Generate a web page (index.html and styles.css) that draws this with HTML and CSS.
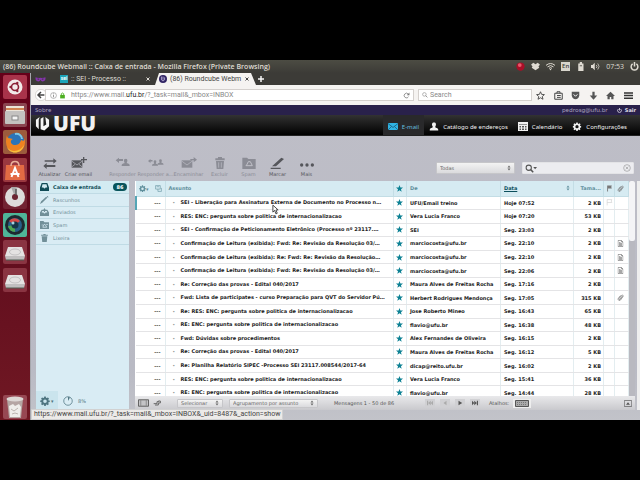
FILE: index.html
```
<!DOCTYPE html>
<html lang="pt-BR">
<head>
<meta charset="utf-8">
<title>(86) Roundcube Webmail :: Caixa de entrada</title>
<link rel="stylesheet" href="styles.css">
</head>
<body>
<svg class="defs" aria-hidden="true">
  <symbol id="star" viewBox="0 0 10 10"><path d="M5 0l1.3 3.5 3.7.2-2.9 2.3 1 3.7L5 7.6 1.9 9.7l1-3.7L0 3.700l3.700-.2z"/></symbol>
  <symbol id="doc" viewBox="0 0 12 14"><path d="M1 1h7l3 3v9H1zM8 1v3h3M3 7h6M3 9h6M3 11h6M3 5h3" fill="none" stroke="currentColor" stroke-width="1.300"/></symbol>
  <symbol id="clip" viewBox="0 0 14 14"><path d="M11 4L6 10.500c-1 1.200-2.800 0-2-1.300L9 3c1.500-2 4.500 0 3 2L7 12c-2 2.500-6 0-4.500-3L7 3" fill="none" stroke="currentColor" stroke-width="1.500"/></symbol>
  <symbol id="gear" viewBox="0 0 20 20"><path fill-rule="evenodd" d="M8.500 1h3l.5 2.500 1.600.7L15.800 3 18 5.200l-1.400 2.100.6 1.500L19.500 9v3l-2.400.5-.7 1.500 1.300 2.200-2.100 2.100-2.100-1.400-1.500.6L11.500 20h-3L8 17.500l-1.500-.6-2.200 1.400-2.200-2.200L3.500 14l-.6-1.500L.5 12V9l2.400-.4.6-1.500L2.100 5l2.200-2.100 2.100 1.300L8 3.500zM10 6.800a3.600 3.600 0 1 0 0 7.200 3.600 3.600 0 0 0 0-7.200z"/></symbol>
  <symbol id="updown" viewBox="0 0 8 12"><path d="M4 1l3 4H1zM4 11L1 7h6z"/></symbol>
  <symbol id="person" viewBox="0 0 20 20"><path d="M10 1c5 0 5 5 3.500 8-1 2-1 3 .5 3.500 3 1 6 1.500 6 5.500v1H0v-1c0-4 3-4.500 6-5.500C7.500 12 7.500 11 6.500 9 5 6 5 1 10 1z"/></symbol>
  <symbol id="power" viewBox="0 0 12 12"><path d="M3.500 2.500a4.500 4.500 0 1 0 5 0M6 0v6" fill="none" stroke="currentColor" stroke-width="2"/></symbol>
  <symbol id="close" viewBox="0 0 8 8"><path d="M1 1l6 6M7 1L1 7" stroke="currentColor" stroke-width="2"/></symbol>
  <symbol id="drive" viewBox="0 0 24 24"><path d="M5 7h14l3 9H2z" fill="#e4e2e2"/><path d="M2 16h20l-1 4H3z" fill="#c0bebf"/><ellipse cx="12" cy="12" rx="5.500" ry="3" fill="none" stroke="#c3c1c2"/><path d="M3 20h18" stroke="#4e5c50"/></symbol>
</svg>

<div class="desktop">
  <header class="titlebar">
    <span>(86) Roundcube Webmail :: Caixa de entrada - Mozilla Firefox (Private Browsing)</span>
    <div class="tray">
      <svg viewBox="0 0 12 12"><circle cx="6" cy="6" r="5.500" fill="#a90f28"/><circle cx="5" cy="4" r="2.500" fill="#e9586a"/></svg>
      <svg viewBox="0 0 12 12"><path d="M3 1l3 2 3-2 3 2.500-2 2 1 2L6 11 1 7.500l1-2-2-2z"/></svg>
      <svg viewBox="0 0 12 12"><path d="M0 4.500q6-5 12 0M2 6.500q4-3.500 8 0M4 8.500q2-2 4 0" fill="none" stroke="currentColor" stroke-width="1.300"/><circle cx="6" cy="10" r="1"/></svg>
      <span class="lang">En</span>
      <svg viewBox="0 0 12 12"><path d="M3 2h2V0h3v2h2v10H3z"/><path d="M5 5h3" stroke="#3c3b37"/></svg>
      <svg viewBox="0 0 12 12"><path d="M0 4h2l3-3v10L2 8H0z"/><path d="M7 4q2 2 0 4M9 2q3.500 4 0 8" fill="none" stroke="currentColor"/></svg>
      <span class="clock">07:53</span>
      <svg viewBox="0 0 12 12"><use href="#power"/></svg>
    </div>
  </header>

  <div class="workspace">
    <nav class="launcher" aria-label="Lançador">
      <div class="apps">
        <svg viewBox="0 0 24 24"><rect width="24" height="24" rx="2" fill="#a8334a"/><circle cx="12" cy="12" r="7.500" fill="#f2eaea"/><circle cx="12" cy="12" r="3.500" fill="none" stroke="#8b2136" stroke-width="1.600"/><g fill="#8b2136"><circle cx="7.500" cy="12" r="1.200"/><circle cx="14.300" cy="8" r="1.200"/><circle cx="14.300" cy="16" r="1.200"/></g></svg>
        <svg viewBox="0 0 24 24"><rect width="24" height="24" rx="2" fill="#8b4550"/><rect x="3" y="3" width="18" height="6" fill="#ece4d8"/><path d="M3 6h18" stroke="#d18454" stroke-width="2"/><rect x="2" y="8" width="20" height="13" rx="1" fill="#c4c2c0"/><rect x="9" y="13" width="6" height="4" fill="#f4f4f4" stroke="#888"/></svg>
        <svg viewBox="0 0 24 24"><rect width="24" height="24" rx="2" fill="#9c5b3d"/><circle cx="12.500" cy="12" r="9" fill="#2c74b8"/><path d="M12 4c4-1 7 2 7 5" stroke="#7fc7e4" stroke-width="2" fill="none"/><path d="M4 5c0 4 3 3 6 4-3 1-3 5 1 6 4 0 6-1 7-5 3 2 4 0 3-3 3 8-1 15-8 15.500C5 22.500 1 15 4 5z" fill="#ee8220"/><path d="M4 17c4 6 13 5 17-2-1 5-5 7.500-9 7.500S5 20 4 17z" fill="#f5be3e"/></svg>
        <svg viewBox="0 0 24 24"><rect width="24" height="24" rx="2" fill="#9a3840"/><path d="M3 7h18l1 15H2z" fill="#e36a43"/><path d="M8 8c0-6 8-6 8 0" fill="none" stroke="#e9b19b" stroke-width="1.500"/><path d="M8.500 19L12 10l3.500 9M7.500 16h9" fill="none" stroke="#fff" stroke-width="2"/></svg>
        <svg viewBox="0 0 24 24"><rect width="24" height="24" rx="2" fill="#722332"/><circle cx="12" cy="12" r="10" fill="#dddcdb"/><path d="M12 12L8 2h6z" fill="#a9a9a9"/><circle cx="12" cy="12" r="3" fill="#6b2431"/><path d="M13 4v6" stroke="#555" stroke-width="1.500"/></svg>
        <svg viewBox="0 0 24 24"><rect width="24" height="24" rx="2" fill="#4fb598"/><circle cx="12" cy="12" r="10" fill="#1d2a30"/><circle cx="12" cy="12" r="7" fill="#265f87"/><path d="M6 8a7 7 0 0 1 11 0l-5 4z" fill="#d64b48"/><path d="M5 13a7 7 0 0 0 7 6v-7z" fill="#4ea751"/><circle cx="12" cy="12" r="3.500" fill="#153447"/><circle cx="10" cy="10" r="1.500" fill="#a3d3df"/></svg>
        <svg viewBox="0 0 24 24"><rect width="24" height="24" rx="2" fill="#8a3442"/><use href="#drive"/></svg>
        <svg viewBox="0 0 24 24"><rect width="24" height="24" rx="2" fill="#8a3442"/><use href="#drive"/></svg>
      </div>
      <svg class="trash" viewBox="0 0 24 24"><rect width="24" height="24" rx="2" fill="#974853"/><path d="M4 4h16l-2 19H6z" fill="#b5a6a3"/><ellipse cx="12" cy="4" rx="8.500" ry="2.500" fill="#ddd8d5"/><path d="M6 11l4-2 2 2 4-2 2 3-1 10H7z" fill="#efeeea"/><path d="M8 14l3 2 4-3M9 19l3-1 3 1" stroke="#bcb5b0" fill="none"/></svg>
    </nav>

    <div class="browser">
      <div class="tabs">
        <svg class="mask" viewBox="0 0 20 10"><path d="M1 1q4 1.500 9 1 5 .5 9-1 1 7-5 7.500-3 0-4-3-1 3-4 3Q0 8 1 1zM4 4q2-1.500 4 .5-2 2-4-.5m8 .5q2-2 4-.5-2 2.500-4 .5" fill="#8434ab" fill-rule="evenodd"/></svg>
        <div class="tab"><span class="favicon">sei</span><span>:: SEI - Processo ::</span><svg viewBox="0 0 8 8"><use href="#close"/></svg></div>
        <div class="tab active"><svg class="site" viewBox="0 0 10 10"><circle cx="5" cy="5" r="5" fill="#312464"/><path d="M3 2v4q2 3 4 0V3M5 2v4" stroke="#c9c1e4" fill="none"/></svg><span>(86) Roundcube Webm</span><svg viewBox="0 0 8 8"><use href="#close"/></svg></div>
        <svg class="plus" viewBox="0 0 8 8"><path d="M4 0v8M0 4h8" stroke="#f6f6f6" stroke-width="2"/></svg>
      </div>
      <div class="navbar">
        <svg class="back" viewBox="0 0 16 16"><circle cx="8" cy="8" r="7.500" fill="#fff" stroke="#cfcdca"/><path d="M12.500 8H4.500M8 4L4 8l4 4" stroke="#444" stroke-width="2" fill="none"/></svg>
        <div class="address">
          <svg viewBox="0 0 12 12"><circle cx="6" cy="6" r="5" fill="none" stroke="#888"/><path d="M6 5v4M6 2.500v1.300" stroke="#777" stroke-width="1.300"/></svg>
          <svg viewBox="0 0 12 12"><path d="M2 5h8v6H2z" fill="#4caf21"/><path d="M4 5V3q2-2.500 4 0v2" fill="none" stroke="#4caf21" stroke-width="1.500"/></svg>
          <span class="url">https://www.mail.<b>ufu.br</b>/?_task=mail&amp;_mbox=INBOX</span>
          <svg class="reload" viewBox="0 0 12 12"><path d="M9.500 8A4 4 0 1 1 9 3.500" fill="none" stroke="#777" stroke-width="1.300"/><path d="M11 1v4.500H6.500z" fill="#777"/></svg>
        </div>
        <div class="websearch"><svg viewBox="0 0 10 10"><circle cx="4" cy="4" r="3" fill="none" stroke="#888"/><path d="M6 6l3 3" stroke="#888" stroke-width="1.400"/></svg><input type="text" placeholder="Search" aria-label="Search"></div>
        <div class="tools">
          <svg viewBox="0 0 12 12"><path d="M6 1l1.500 3.500 3.700.3-2.800 2.500.9 3.700L6 9l-3.300 2 .9-3.700L.8 4.800l3.700-.3z" fill="none" stroke="#444" stroke-width="1.200"/></svg>
          <svg viewBox="0 0 12 12"><path d="M1 3h10v8H1zM4 3V1h4v2M4 6h5M4 8.500h5" fill="none" stroke="#444" stroke-width="1.300"/></svg>
          <svg viewBox="0 0 12 12"><path d="M1 1h10v5q-1 5-5 5T1 6z" fill="#555"/><path d="M3.500 4.500L6 7l2.500-2.500" stroke="#fff" fill="none" stroke-width="1.300"/></svg>
          <svg viewBox="0 0 12 12"><path d="M4.500 1h3v5H11l-5 5.500L1 6h3.500z" fill="#555"/></svg>
          <svg viewBox="0 0 12 12"><path d="M6 1l6 5.500h-2V11H7V8H5v3H2V6.500H0z" fill="#555"/></svg>
          <svg viewBox="0 0 12 12"><path d="M0 2.500h12M0 6h12M0 9.500h12" stroke="#333" stroke-width="2"/></svg>
        </div>
      </div>

      <div class="topline"><a href="#">Sobre</a><span class="user">pedrosg@ufu.br</span><a class="logout" href="#"><svg viewBox="0 0 12 12"><use href="#power"/></svg>Sair</a></div>
      <div class="mainbar">
        <div class="logo"><svg viewBox="0 0 16 16"><path d="M5 1L1 4v7l3 3V4zM11 1l4 3v7l-5 4.500-4-1.500V3l3-2v10l3-2z" fill="#f5f5f5"/></svg><span>UFU</span></div>
        <nav class="tasks">
          <a class="current" href="#"><svg viewBox="0 0 20 14"><path d="M0 0h20v14H0z" fill="#2fb3e3"/><path d="M0 1l10 8 10-8M0 14l7-7M20 14l-7-7" fill="none" stroke="#184b66" stroke-width="1.400"/></svg>E-mail</a>
          <a href="#"><svg viewBox="0 0 20 20"><use href="#person"/></svg>Catálogo de endereços</a>
          <a href="#"><svg viewBox="0 0 20 18"><path d="M0 0h20v18H0z"/><path d="M2 5h16" stroke="#333"/><path d="M3 8h3v3H3zM8 8h4v3H8zM14 8h3v3h-3zM3 13h3v3H3zM8 13h4v3H8zM14 13h3v3h-3z" fill="#555"/></svg>Calendário</a>
          <a href="#"><svg viewBox="0 0 20 20"><use href="#gear"/></svg>Configurações</a>
        </nav>
      </div>

      <div class="toolbar">
        <button type="button" class="on"><svg viewBox="0 0 24 18"><path d="M4 5h13v-3l5 4-5 4V7H4zM20 12H7V9l-5 4.500L7 18v-3h13z"/></svg>Atualizar</button>
        <button type="button" class="on"><svg viewBox="0 0 24 18"><path d="M1 5h16v11H1z"/><path d="M1 6l8 6 8-6M1 15l5-4M17 15l-5-4" stroke="#c0c0c8" fill="none"/><path d="M19 0v9M15 4h9" stroke="currentColor" stroke-width="2"/></svg>Criar email</button>
        <button type="button" class="reply gap" disabled><svg viewBox="0 0 24 18"><path d="M1 5l5-4v2h6v3H6v3z"/><svg x="8" y="2" width="16" height="16"><use href="#person"/></svg></svg>Responder</button>
        <button type="button" class="reply" disabled><svg viewBox="0 0 32 18"><path d="M0 5l5-4v2h4v3H5v3z"/><svg x="6" y="3" width="14" height="14"><use href="#person"/></svg><svg x="17" y="1" width="15" height="16"><use href="#person"/></svg></svg>Responder a...</button>
        <button type="button" class="reply" disabled><svg viewBox="0 0 24 18"><path d="M1 5h16v11H1z"/><path d="M1 6l8 6 8-6" stroke="#c0c0c8" fill="none"/><path d="M14 3h5V0l5 4-5 4V5h-5z"/></svg>Encaminhar</button>
        <button type="button" disabled><svg viewBox="0 0 24 18"><path d="M5 2h4V0h6v2h4v3H5zM6 6h12l-1 12H7z"/><path d="M10 8v8M14 8v8" stroke="#c0c0c8"/></svg>Excluir</button>
        <button type="button" disabled><svg viewBox="0 0 24 18"><path d="M2 1h7l2 2h11v15H2z"/><path d="M8 13l3-6h3l3 6M7 13h10" stroke="#c0c0c8" stroke-width="1.500" fill="none"/></svg>Spam</button>
        <button type="button" class="on"><svg viewBox="0 0 24 18"><path d="M3 14L17 1l4 2L9 14zM1 16h15v2H1z"/></svg>Marcar</button>
        <button type="button" class="on"><svg viewBox="0 0 24 18"><circle cx="4" cy="12" r="2.500"/><circle cx="12" cy="12" r="2.500"/><circle cx="20" cy="12" r="2.500"/></svg>Mais</button>
        <div class="filters">
          <span class="pick scope"><select aria-label="Filtro"><option>Todas</option></select><svg viewBox="0 0 8 12"><use href="#updown"/></svg></span>
          <div class="search"><svg viewBox="0 0 16 12"><circle cx="5" cy="5" r="3.500" fill="none" stroke="#555" stroke-width="1.400"/><path d="M7.500 7.500L11 11" stroke="#555" stroke-width="2"/><path d="M11 4h5l-2.500 3z" fill="#555"/></svg><input type="text" aria-label="Buscar"><svg class="clear" viewBox="0 0 12 12"><circle cx="6" cy="6" r="5" fill="none" stroke="#999"/><path d="M4 4l4 4M8 4L4 8" stroke="#999"/></svg></div>
        </div>
      </div>

      <main class="mail">
        <aside class="folders">
          <ul>
            <li class="selected"><svg viewBox="0 0 16 14"><path fill-rule="evenodd" d="M3 0h10l3 8v6H0V8zM4.500 2L3 8h3q2 3 4 0h3l-1.500-6z"/></svg><a href="#">Caixa de entrada</a><span class="count">86</span></li>
            <li><svg viewBox="0 0 16 14"><path d="M0 14l2-5 9-8 2 2-9 9zM12 0h2l1 2-1 1z"/></svg><a href="#">Rascunhos</a></li>
            <li><svg viewBox="0 0 16 14"><path fill-rule="evenodd" d="M3 3h3l2-3 2 3h3l3 5v6H0V8zM4 5L3 8h3q2 3 4 0h3l-1-3H9v2H7V5z"/></svg><a href="#">Enviados</a></li>
            <li><svg viewBox="0 0 16 14"><path d="M0 0h6l2 2h8v12H0z"/><path d="M5 11l2-5h2l3 5zM3 7h2M11 6h3" stroke="#d9ecf4" fill="none" stroke-width="1.300"/></svg><a href="#">Spam</a></li>
            <li><svg viewBox="0 0 16 14"><path d="M2 1h4V0h4v1h4v2H2zM3 4h10l-1 10H4z"/></svg><a href="#">Lixeira</a></li>
          </ul>
          <div class="quota"><button type="button" aria-label="Ações da pasta"><svg viewBox="0 0 20 20"><use href="#gear"/></svg><span class="caret">▾</span></button><svg viewBox="0 0 20 20"><circle cx="10" cy="10" r="8.500" fill="none" stroke="currentColor" stroke-width="1.500"/><path d="M10 10V2q3 0 4 1z"/></svg><span>8%</span></div>
        </aside>

        <section class="list">
          <div class="scroller">
            <table>
              <colgroup><col class="c-thread"><col><col class="c-star"><col class="c-from"><col class="c-date"><col class="c-size"><col class="c-flag"><col class="c-att"></colgroup>
              <thead><tr>
                <th><svg viewBox="0 0 20 20"><use href="#gear"/></svg><span class="caret">▾</span><svg class="threads" viewBox="0 0 12 12"><path d="M1 1h8v6H1zM5 7v4h6V5M3 3h4" fill="none" stroke="currentColor"/></svg></th>
                <th class="h-subject">Assunto</th>
                <th class="star"><svg viewBox="0 0 10 10"><use href="#star"/></svg></th>
                <th>De</th>
                <th class="sorted"><div><a href="#">Data</a><svg viewBox="0 0 8 12"><use href="#updown"/></svg></div></th>
                <th class="h-size">Tama...</th>
                <th class="icon"><svg viewBox="0 0 12 12"><path d="M2 11V1h8L9 3.500 10 6H3.500v5z"/></svg></th>
                <th class="icon"><svg viewBox="0 0 14 14"><use href="#clip"/></svg></th>
              </tr></thead>
              <tbody>
                <tr class="focused"><td>---</td><td>SEI - Liberação para Assinatura Externa de Documento no Processo n…</td><td class="star"><svg viewBox="0 0 10 10"><use href="#star"/></svg></td><td>UFU/Email treino</td><td>Hoje 07:52</td><td>2 KB</td><td class="icon faint"><svg viewBox="0 0 12 12"><path d="M2 11V1h8L9 3.500 10 6H2" fill="none" stroke="currentColor"/></svg></td><td></td></tr>
                <tr><td>---</td><td>RES: ENC: pergunta sobre politica de internacionalizacao</td><td class="star"><svg viewBox="0 0 10 10"><use href="#star"/></svg></td><td>Vera Lucia Franco</td><td>Hoje 07:20</td><td>53 KB</td><td></td><td></td></tr>
                <tr><td>---</td><td>SEI - Confirmação de Peticionamento Eletrônico (Processo nº 23117.…</td><td class="star"><svg viewBox="0 0 10 10"><use href="#star"/></svg></td><td>SEI</td><td>Seg. 23:03</td><td>2 KB</td><td></td><td></td></tr>
                <tr><td>---</td><td>Confirmação de Leitura (exibida): Fwd: Re: Revisão da Resolução 03/…</td><td class="star"><svg viewBox="0 0 10 10"><use href="#star"/></svg></td><td>marciocosta@ufu.br</td><td>Seg. 22:10</td><td>2 KB</td><td></td><td class="icon"><svg viewBox="0 0 12 14"><use href="#doc"/></svg></td></tr>
                <tr><td>---</td><td>Confirmação de Leitura (exibida): Re: Fwd: Re: Revisão da Resolução…</td><td class="star"><svg viewBox="0 0 10 10"><use href="#star"/></svg></td><td>marciocosta@ufu.br</td><td>Seg. 22:10</td><td>2 KB</td><td></td><td class="icon"><svg viewBox="0 0 12 14"><use href="#doc"/></svg></td></tr>
                <tr><td>---</td><td>Confirmação de Leitura (exibida): Fwd: Re: Revisão da Resolução 03/…</td><td class="star"><svg viewBox="0 0 10 10"><use href="#star"/></svg></td><td>marciocosta@ufu.br</td><td>Seg. 22:06</td><td>2 KB</td><td></td><td class="icon"><svg viewBox="0 0 12 14"><use href="#doc"/></svg></td></tr>
                <tr><td>---</td><td>Re: Correção das provas - Edital 040/2017</td><td class="star"><svg viewBox="0 0 10 10"><use href="#star"/></svg></td><td>Maura Alves de Freitas Rocha</td><td>Seg. 17:16</td><td>2 KB</td><td></td><td></td></tr>
                <tr><td>---</td><td>Fwd: Lista de participates - curso Preparação para QVT do Servidor Pú…</td><td class="star"><svg viewBox="0 0 10 10"><use href="#star"/></svg></td><td>Herbert Rodrigues Mendonça</td><td>Seg. 17:05</td><td>315 KB</td><td></td><td class="icon"><svg viewBox="0 0 14 14"><use href="#clip"/></svg></td></tr>
                <tr><td>---</td><td>Re: RES: ENC: pergunta sobre politica de internacionalizacao</td><td class="star"><svg viewBox="0 0 10 10"><use href="#star"/></svg></td><td>Jose Roberto Mineo</td><td>Seg. 16:43</td><td>65 KB</td><td></td><td></td></tr>
                <tr><td>---</td><td>RE: ENC: pergunta sobre politica de internacionalizacao</td><td class="star"><svg viewBox="0 0 10 10"><use href="#star"/></svg></td><td>flavio@ufu.br</td><td>Seg. 16:38</td><td>48 KB</td><td></td><td></td></tr>
                <tr><td>---</td><td>Fwd: Dúvidas sobre procedimentos</td><td class="star"><svg viewBox="0 0 10 10"><use href="#star"/></svg></td><td>Alex Fernandes de Oliveira</td><td>Seg. 16:15</td><td>2 KB</td><td></td><td></td></tr>
                <tr><td>---</td><td>Re: Correção das provas - Edital 040/2017</td><td class="star"><svg viewBox="0 0 10 10"><use href="#star"/></svg></td><td>Maura Alves de Freitas Rocha</td><td>Seg. 16:12</td><td>5 KB</td><td></td><td></td></tr>
                <tr><td>---</td><td>Re: Planilha Relatório SIPEC -Processo SEI 23117.008544/2017-64</td><td class="star"><svg viewBox="0 0 10 10"><use href="#star"/></svg></td><td>dicap@reito.ufu.br</td><td>Seg. 16:02</td><td>2 KB</td><td></td><td></td></tr>
                <tr><td>---</td><td>RES: ENC: pergunta sobre politica de internacionalizacao</td><td class="star"><svg viewBox="0 0 10 10"><use href="#star"/></svg></td><td>Vera Lucia Franco</td><td>Seg. 15:41</td><td>36 KB</td><td></td><td></td></tr>
                <tr><td>---</td><td>RE: ENC: pergunta sobre politica de internacionalizacao</td><td class="star"><svg viewBox="0 0 10 10"><use href="#star"/></svg></td><td>flavio@ufu.br</td><td>Seg. 14:44</td><td>28 KB</td><td></td><td></td></tr>
              </tbody>
            </table>
            <div class="scrollbar"><i></i></div>
          </div>
          <footer>
            <svg class="view" viewBox="0 0 12 8"><path d="M.5.5h11v7H.5z" fill="#c4c4c6" stroke="#555"/><path d="M3 0v8M9 0v8" stroke="#888"/></svg>
            <svg class="link" viewBox="0 0 12 8"><path d="M1 5h5V2h3M3 7h5V4h3V1H8" fill="none" stroke="#666" stroke-width="1.500"/></svg>
            <span class="pick sel"><select aria-label="Selecionar"><option>Selecionar</option></select><svg viewBox="0 0 8 12"><use href="#updown"/></svg></span>
            <span class="pick group"><select aria-label="Agrupamento"><option>Agrupamento por assunto</option></select><svg viewBox="0 0 8 12"><use href="#updown"/></svg></span>
            <span class="total">Mensagens 1 - 50 de 86</span>
            <div class="pager">
              <button type="button" aria-label="Primeira" disabled><svg viewBox="0 0 8 8"><path d="M0 1h1.500v6H0zM5 1v6L1.500 4zM8 1v6L5 4z"/></svg></button>
              <button type="button" aria-label="Anterior" disabled><svg viewBox="0 0 8 8"><path d="M6 1v6L2 4z"/></svg></button>
              <button type="button" aria-label="Próxima"><svg viewBox="0 0 8 8"><path d="M2 1v6l5-3z"/></svg></button>
              <button type="button" aria-label="Última"><svg viewBox="0 0 8 8"><path d="M8 1H6.500v6H8zM3 1v6l3.500-3zM0 1v6l3-3z"/></svg></button>
            </div>
            <span class="keys">Atalhos:</span>
            <button type="button" class="keyboard" aria-label="Teclado"><svg viewBox="0 0 14 7"><path d="M.5.5h13v6H.5z" fill="#aaa" stroke="#555"/><path d="M2 2.500h10M2 4.500h10" stroke="#777" stroke-dasharray="1 1"/></svg></button>
            <svg class="fold" viewBox="0 0 12 10"><path d="M.5.500h11v9H.5z" fill="none" stroke="#555"/><path d="M6 3l3 4H3z" fill="#555"/></svg>
          </footer>
        </section>
        <section class="preview"></section>
      </main>
      <div class="status">https://www.mail.ufu.br/?_task=mail&amp;_mbox=INBOX&amp;_uid=8487&amp;_action=show</div>
    </div>
  </div>
  <svg class="pointer" viewBox="0 0 8 12"><path d="M1 1v8l2-2 1.500 4 1.500-.7L4.500 6.500H7z" fill="#fff" stroke="#333"/></svg>
</div>
</body>
</html>
```
FILE: styles.css
```
* { box-sizing: border-box; }
body { margin: 0; padding: 60px 0; height: 100vh; display: flex; background: #000; font-family: "DejaVu Sans", sans-serif; font-size: 5px; line-height: 8px; overflow: hidden; }
svg { display: block; flex: none; fill: currentColor; }
a { color: inherit; text-decoration: none; }
button, input, select { font: inherit; color: inherit; margin: 0; padding: 0; border: 0; background: none; min-width: 0; outline: 0; }
.defs { position: absolute; width: 0; height: 0; }
.desktop { position: relative; flex: 1; min-width: 0; display: flex; flex-direction: column; }

.titlebar { height: 13px; padding: 0 1px 0 3px; display: flex; align-items: center; justify-content: space-between; background: linear-gradient(#4c4c43, #3c3b37); color: #dfdbd2; font: 600 7px/12px "Open Sans", sans-serif; }
.tray { display: flex; align-items: center; gap: 6px; }
.tray svg { width: 9px; height: 9px; }
.lang { width: 9px; text-align: center; background: #d8d5cc; color: #3c3b37; font-size: 6px; line-height: 9px; }
.clock { font-weight: normal; }

.workspace { flex: 1; display: flex; min-height: 0; }
.launcher { width: 30px; flex: none; padding: 2px 3px 1px; display: flex; flex-direction: column; justify-content: space-between; background: linear-gradient(#650019, #5d0a1c 35%, #701823); }
.launcher svg { width: 24px; height: 24px; }
.apps { height: 217px; display: flex; flex-direction: column; justify-content: space-between; }
.browser { position: relative; flex: 1; min-width: 0; display: flex; flex-direction: column; background: linear-gradient(#cacad0, #bebec7 12%, #b9bac4 85%, #c2c3c9); border-left: 1px solid #a6a7ad; }

.tabs { height: 12px; flex: none; display: flex; align-items: center; background: #3c3b37; font: 7px/11px Roboto, sans-serif; color: #dedbd5; }
.mask { width: 11px; height: 7px; margin-left: 4px; }
.tab { height: 12px; display: flex; align-items: center; gap: 3px; margin-left: 14px; width: 90px; white-space: nowrap; }
.tab > svg:last-child { width: 4px; height: 4px; margin-left: auto; }
.favicon { width: 8px; height: 8px; background: #1ca4b8; color: #fff; font-weight: bold; font-size: 5px; line-height: 7px; text-align: center; }
.tab.active { margin-left: 5px; width: 101px; padding: 0 7px 0 4px; background: #f5f3f1; color: #444; clip-path: polygon(4px 0, 96px 0, 101px 12px, 0 12px); }
.site { width: 8px; height: 8px; }
.plus { width: 6px; height: 6px; margin-left: 2px; }

.navbar { height: 20px; flex: none; padding: 0 7px 0 4px; display: flex; align-items: center; background: #f5f3f1; color: #777; font: 7px/10px Roboto, sans-serif; }
.back { width: 12px; height: 12px; margin-right: -2px; }
.address { flex: 1; height: 12px; padding: 0 3px 0 4px; display: flex; align-items: center; gap: 2px; background: #fff; border: 1px solid #d4d0cd; }
.address svg { width: 7px; height: 7px; }
.url { flex: 1; padding-left: 3px; color: #888; }
.url b { font-weight: normal; color: #222; }
.websearch { width: 114px; height: 12px; margin-left: 4px; padding: 0 3px; display: flex; align-items: center; gap: 2px; background: #fff; border: 1px solid #d4d0cd; }
.websearch svg { width: 6px; height: 6px; }
.websearch input { flex: 1; }
.websearch input::placeholder { color: #888; }
.tools { width: 97px; margin-left: 4px; display: flex; justify-content: space-between; }
.tools svg { width: 9px; height: 9px; }

.topline { height: 10px; flex: none; padding: 0 4px; display: flex; align-items: center; background: #29214b; color: #a9a4bd; }
.topline a:first-child, .user { font: 6px/8px "Noto Sans", sans-serif; }
.user { margin-left: auto; margin-right: 9px; }
.logout { display: flex; align-items: center; gap: 3px; color: #e2e0ea; font-weight: bold; }
.logout svg { width: 5px; height: 5px; }
.mainbar { height: 21px; flex: none; display: flex; align-items: stretch; background: linear-gradient(#323232, #080808 85%, #000); color: #f1f1f1; padding-right: 8px; border-bottom: 1px solid #222; }
.logo { display: flex; align-items: center; gap: 3px; padding: 0 0 4px 4px; font: 800 21px/16px "Open Sans", sans-serif; }
.logo svg { width: 15px; height: 15px; }
.tasks { margin-left: auto; display: flex; font: 6px/8px "Noto Sans", sans-serif; }
.tasks a { display: flex; align-items: center; gap: 4px; padding: 3px 5px 0; white-space: nowrap; }
.tasks svg { width: 10px; height: 9px; }
.tasks .current { color: #65bddd; background: #29292b; }

.toolbar { height: 45px; flex: none; padding: 0 6px 3px 4px; display: flex; align-items: flex-end; color: #55565b; line-height: 7px; }
.toolbar button { width: 29px; display: flex; flex-direction: column; align-items: center; gap: 2px; white-space: nowrap; }
.toolbar button svg { width: 16px; height: 12px; }
.toolbar button:disabled { color: #8b8c95; }
.toolbar .reply { width: 33px; }
.toolbar .gap { margin-left: 13px; }
.filters { margin: 0 0 4px auto; display: flex; gap: 7px; }
.pick { display: flex; align-items: center; border: 1px solid #c6c6c9; border-radius: 1px; background: linear-gradient(#f3f3f3, #dadadd); color: #666; }
.pick select { appearance: none; flex: 1; padding-left: 3px; }
.pick svg { width: 4px; height: 6px; margin: 0 3px; color: #666; }
.scope { width: 79px; height: 12px; }
.search { width: 112px; height: 12px; padding: 0 2px; display: flex; align-items: center; gap: 2px; background: #ececf0; border: 1px solid #e3e3e6; border-radius: 1px; }
.search svg { width: 12px; height: 9px; }
.search input { flex: 1; height: 8px; }
.search .clear { width: 8px; height: 8px; }

.mail { flex: 1; min-height: 0; padding: 0 0 10px 5px; display: flex; }
.folders { width: 93px; flex: none; margin-right: 6px; display: flex; flex-direction: column; justify-content: space-between; background: #d9ecf4; color: #718f98; }
.folders ul { height: 64px; list-style: none; margin: 0; padding: 0; display: flex; flex-direction: column; }
.folders li { flex: 1; padding: 0 2px 0 4px; display: flex; align-items: center; gap: 4px; border-bottom: 1px solid #c0dbe5; }
.folders li svg { width: 9px; height: 8px; }
.folders .selected { color: #104b56; font-weight: bold; background: #d3ebf2; }
.count { margin-left: auto; width: 14px; text-align: center; border-radius: 4px; background: #09545b; color: #fff; }
.quota { height: 19px; display: flex; align-items: center; gap: 5px; color: #4e7480; }
.quota button { width: 22px; height: 19px; padding-left: 4px; display: flex; align-items: center; gap: 1px; background: #cae4ed; }
.quota svg { width: 10px; height: 10px; }

.list { flex: 1; min-width: 0; display: flex; flex-direction: column; }
.scroller { flex: 1; min-height: 0; display: flex; align-items: flex-start; overflow: hidden; background: #fff; }
table { width: 100%; flex: 1; min-width: 0; height: 219px; table-layout: fixed; border-collapse: collapse; color: #222; font-weight: bold; }
.c-thread { width: 29px; } .c-star { width: 13px; } .c-from { width: 94px; } .c-date { width: 73px; }
.c-size { width: 30px; } .c-flag { width: 11px; } .c-att { width: 14px; }
th, td { padding: 0 3px; text-align: left; white-space: nowrap; overflow: hidden; text-overflow: ellipsis; border-right: 1px solid #e3edf0; border-bottom: 1px solid #e4e4e6; vertical-align: middle; }
th { height: 15px; background: #d6ebf2; color: #5f8f9c; border-color: #c3dde5; }
th svg, td svg { width: 7px; height: 7px; }
th:first-child svg, .caret { display: inline-block; vertical-align: middle; }
.threads { margin-left: 6px; }
.caret { font-size: 5px; }
td:first-child { text-align: right; padding-right: 4px; color: #444; }
td:nth-child(2) { padding: 0 2px 0 15px; }
td:nth-child(2)::before { content: "•"; margin-left: -8px; display: inline-block; width: 8px; color: #999; font-size: 4px; }
td:nth-child(6), .h-size { text-align: right; padding: 0 2px 0 0; }
th.star, td.star { padding: 0 2px; color: #0c8194; }
th.icon, td.icon { padding: 0 2px; color: #777; }
td.faint { color: #ccc; }
.focused td:first-child { border-left: 2px solid #55a5b5; }
.sorted div { display: flex; justify-content: space-between; align-items: center; }
.sorted a { color: #0c4f5c; text-decoration: underline; }
.sorted svg { width: 4px; height: 6px; }
.scrollbar { width: 6px; flex: none; align-self: stretch; background: #b9b9c0; }
.scrollbar i { display: block; height: 60px; border-radius: 2px; background: #f4f4f6; }
footer { height: 14px; flex: none; padding: 0 3px; display: flex; align-items: center; background: linear-gradient(#e9e9eb, #c9c9cd); color: #555; white-space: nowrap; }
.view { width: 11px; height: 8px; }
.link { width: 8px; height: 6px; margin-left: 4px; }
.sel { width: 46px; height: 9px; margin-left: 16px; }
.group { width: 89px; height: 9px; margin-left: 6px; }
.total { width: 107px; padding-left: 16px; }
.pager { display: flex; gap: 5px; }
.pager button { width: 10px; height: 8px; padding: 1px 2px; background: #d0d0d3; }
.pager button:disabled { color: #aaa; }
.pager svg { width: 6px; height: 6px; }
.keys { margin-left: 9px; }
.keyboard { width: 18px; height: 9px; margin-left: 4px; padding: 1px 2px; background: #eee; }
.keyboard svg { width: 14px; height: 7px; }
.fold { width: 8px; height: 7px; margin-left: auto; }
.preview { width: 3px; margin-left: 2px; background: #eee; }
.status { position: absolute; left: 0; bottom: 0; height: 11px; padding: 0 2px; background: #eceae8; color: #444; border: 1px solid #d1d1d1; font: 7px/9px Roboto, sans-serif; }
.pointer { position: absolute; left: 272px; top: 144px; width: 7px; height: 11px; }
```
